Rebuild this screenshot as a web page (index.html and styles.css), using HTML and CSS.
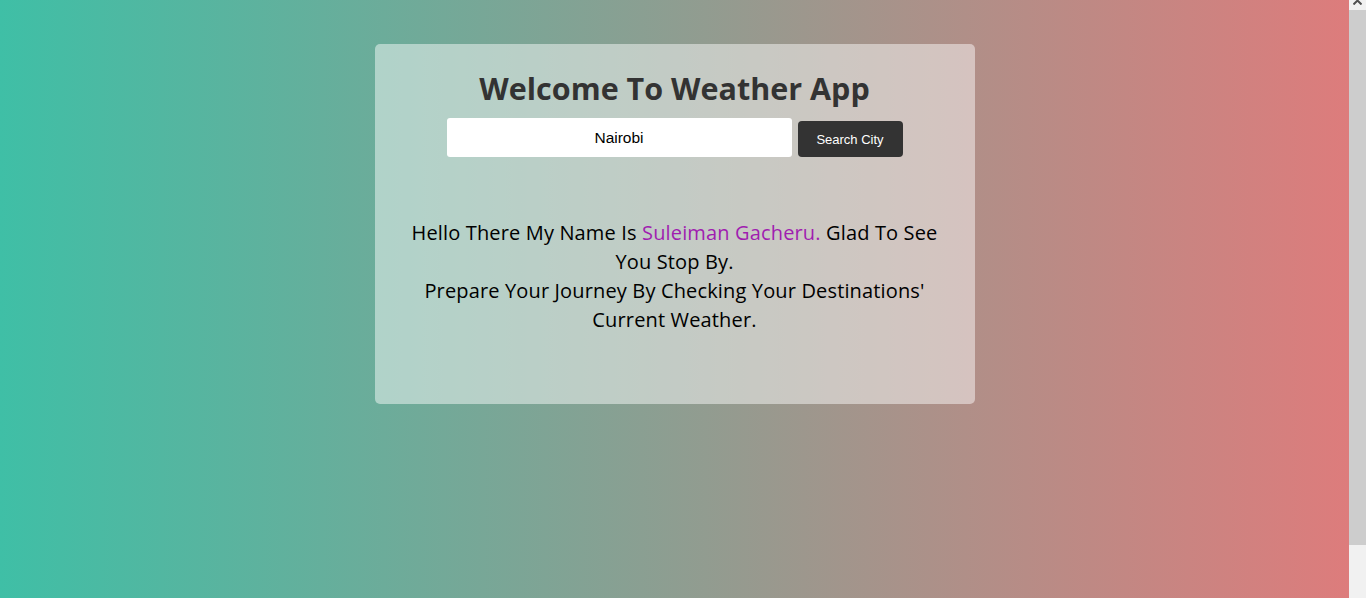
FILE: index.html
```html
<!DOCTYPE html>
<html lang="en">
<head>
<meta charset="utf-8">
<title>Weather App</title>
<link rel="stylesheet" href="styles.css">
</head>
<body>
<main class="page">
  <section class="card">
    <h1 class="title">Welcome To Weather App</h1>
    <form class="search" onsubmit="return false">
      <input class="search-input" type="text" value="Nairobi">
      <button class="search-btn" type="submit">Search City</button>
    </form>
    <div class="intro">
      <p>Hello There My Name Is <span class="name">Suleiman Gacheru.</span> Glad To See You Stop By.</p>
      <p>Prepare Your Journey By Checking Your Destinations' Current Weather.</p>
    </div>
  </section>
</main>
<div class="scrollbar" aria-hidden="true">
  <div class="scroll-up">
    <svg width="9" height="6" viewBox="0 0 9 6"><path d="M0.5 5.5 L4.5 1.5 L8.5 5.5" fill="none" stroke="#505050" stroke-width="2"/></svg>
  </div>
  <div class="scroll-thumb"></div>
  <div class="scroll-track"></div>
</div>
</body>
</html>
```
FILE: styles.css
```css
html, body {
  margin: 0;
  padding: 0;
}
body {
  display: flex;
  min-height: 598px;
  font-family: "Open Sans", "Noto Sans", sans-serif;
  overflow: hidden;
}
.page {
  flex: 1;
  min-height: 630px;
  background: linear-gradient(to right, #3fbfa6, #dd7c7c);
  display: flex;
  flex-direction: column;
  align-items: center;
  padding-top: 44px;
  box-sizing: border-box;
}
.scrollbar {
  width: 17px;
  height: 598px;
  flex: none;
  background: #f1f1f1;
  display: flex;
  flex-direction: column;
}
.scroll-up {
  height: 10px;
  display: flex;
  justify-content: center;
  align-items: flex-start;
  overflow: hidden;
}
.scroll-up svg {
  margin-top: -1px;
}
.scroll-thumb {
  height: 535px;
  background: #cdcdcd;
}
.scroll-track {
  flex: 1;
}
.card {
  width: 600px;
  box-sizing: border-box;
  padding: 24px 30px 70px;
  background: rgba(255, 255, 255, 0.47);
  border-radius: 5px;
  display: flex;
  flex-direction: column;
  align-items: center;
}
.title {
  margin: 0;
  font-family: "Open Sans", sans-serif;
  font-weight: 700;
  font-size: 30.5px;
  line-height: 40px;
  color: #333333;
}
.search {
  margin-top: 10px;
  display: flex;
  align-items: flex-end;
  gap: 6px;
}
.search-input {
  width: 345px;
  height: 39px;
  box-sizing: border-box;
  border: none;
  border-radius: 3px;
  background: #ffffff;
  text-align: center;
  font-family: "Liberation Sans", sans-serif;
  font-size: 15.5px;
  color: #000;
  outline: none;
}
.search-btn {
  width: 105px;
  height: 36px;
  border: none;
  border-radius: 4px;
  background: #333333;
  color: #ffffff;
  font-family: "Liberation Sans", sans-serif;
  font-size: 13px;
}
.intro {
  margin-top: 61px;
  text-align: center;
  font-family: "Open Sans", sans-serif;
  font-size: 20px;
  letter-spacing: 0.15px;
  line-height: 29px;
  color: #000;
}
.intro p {
  margin: 0;
}
.name {
  color: #a01db0;
}
```
